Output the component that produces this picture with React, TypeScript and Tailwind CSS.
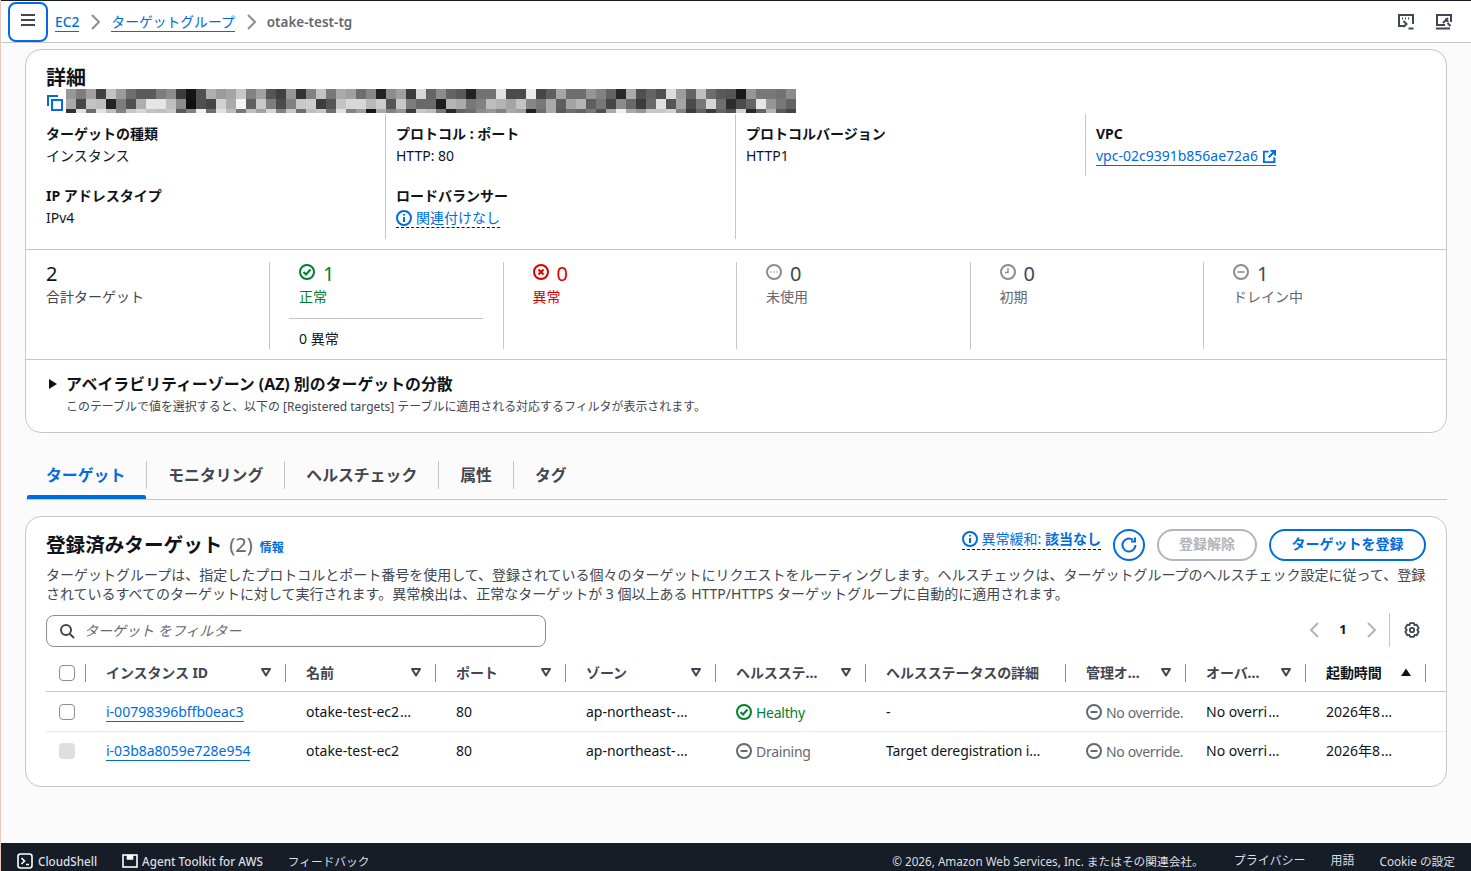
import React from 'react';

const BLUE = '#006ce0';

const pixelRows = [
  [150,125,160,65,195,155,110,90,90,125,140,60,20,80,175,155,165,200,130,160,85,65,150,50,130,195,120,170,160,110,135,35,140,160,60,215,100,140,100,90,35,115,115,225,75,75,235,70,95,165,110,110,150,130,100,40,170,80,100,80,220,155,100,190,110,90,85,25,150,120,120,115,140],
  [170,70,195,190,35,125,80,175,230,230,190,140,15,80,70,210,170,245,95,200,125,75,130,200,205,60,85,195,215,215,185,205,85,200,125,105,105,30,180,170,120,130,190,180,165,195,135,120,170,95,165,180,95,120,70,140,105,60,105,225,85,165,75,120,215,110,45,75,100,230,150,120,100],
  [50,225,110,225,190,130,200,215,195,190,200,90,130,240,110,225,190,120,190,160,215,130,200,110,190,200,110,225,130,160,25,170,130,150,60,200,190,120,40,100,110,140,150,130,170,160,35,110,170,90,110,100,120,80,170,240,170,150,200,200,210,130,60,100,60,100,80,210,40,100,180,90,70],
];

const IconCircleBase = ({ color, children, size = 16 }: { color: string; children?: React.ReactNode; size?: number }) => (
  <svg width={size} height={size} viewBox="0 0 16 16" fill="none" stroke={color} strokeWidth="2" className="shrink-0">
    <circle cx="8" cy="8" r="7" />
    {children}
  </svg>
);

const Chevron = ({ dir = 'right', color = '#8c8c94' }: { dir?: 'left' | 'right'; color?: string }) => (
  <svg width="16" height="16" viewBox="0 0 16 16" fill="none" stroke={color} strokeWidth="2">
    <path d={dir === 'right' ? 'M5 1l7 7-7 7' : 'M11 1L4 8l7 7'} />
  </svg>
);

const InfoLink = ({ label, strong }: { label: string; strong?: string }) => (
  <span className="inline-flex items-center gap-[4px] border-b border-dashed border-[#0f141a] h-[20px] text-[14px] text-[#006ce0] leading-[18px]">
    <IconCircleBase color={BLUE}>
      <path d="M8 7v5M8 4v1.6" />
    </IconCircleBase>
    <span>{label}{strong && <span className="font-bold"> {strong}</span>}</span>
  </span>
);

const Field = ({ label, children }: { label: string; children: React.ReactNode }) => (
  <div className="h-[62px]">
    <div className="text-[14px] font-bold leading-[20px] text-[#0f141a] h-[22px]">{label}</div>
    <div className="text-[14px] leading-[20px] text-[#0f141a]">{children}</div>
  </div>
);

const Stat = ({ icon, value, label, color, numColor, children }: { icon?: React.ReactNode; value: string; label: string; color: string; numColor?: string; children?: React.ReactNode }) => (
  <div className="w-[233.5px] h-[87px] pl-[29px] shrink-0 border-l border-[#c6c6cd]">
    <div className="flex items-center gap-[8px] h-[24px]">
      <span className="mt-[-4px]">{icon}</span>
      <span className="text-[20px] leading-[24px]" style={{ color: numColor || color }}>{value}</span>
    </div>
    <div className="text-[14px] leading-[22px]" style={{ color }}>{label}</div>
    {children}
  </div>
);

const Tab = ({ label, active }: { label: string; active?: boolean }) => (
  <div className="relative h-[38px] flex items-start">
    <div className={`h-[28px] pr-[21px] flex items-center text-[15.85px] font-bold leading-[22px] ${active ? 'text-[#006ce0] pl-[20px]' : 'text-[#424650] pl-[21px]'}`}>{label}</div>
    {active && <div className="absolute left-[1px] right-0 bottom-0 h-[4px] bg-[#006ce0] rounded-t-[2px]"></div>}
  </div>
);

const TabSep = () => <div className="w-px h-[28px] bg-[#c6c6cd]"></div>;

const SortDown = () => (
  <svg width="12" height="12" viewBox="0 0 12 12" fill="none" stroke="#424650" strokeWidth="2" className="shrink-0">
    <path d="M2 3h8L6 9.5z" strokeLinejoin="round" />
  </svg>
);

const HeaderCell = ({ label, sort = 'down', active }: { label: string; sort?: 'down' | 'up' | 'none'; active?: boolean }) => (
  <div className="h-[36px] flex items-center pl-[20px] pr-[14px] pb-[2px] relative">
    <span className={`flex-1 text-[14px] font-bold whitespace-nowrap tracking-[-0.1px] ${active ? 'text-[#0f141a]' : 'text-[#424650]'}`}>{label}</span>
    {sort === 'down' && <SortDown />}
    {sort === 'up' && (
      <svg width="12" height="12" viewBox="0 0 12 12" fill="#0f141a" className="shrink-0"><path d="M1 10h10L6 2.5z" /></svg>
    )}
    <span className="absolute right-0 top-[9px] h-[18px] w-px bg-[#8c8c94]"></span>
  </div>
);

const Checkbox = ({ disabled }: { disabled?: boolean }) => (
  <div className={`w-[16px] h-[16px] rounded-[4px] ${disabled ? 'bg-[#dedee3]' : 'bg-white border border-[#8c8c94]'}`}></div>
);

const MinusIcon = () => (
  <IconCircleBase color="#656871">
    <path d="M4.5 8h7" />
  </IconCircleBase>
);

const Cell = ({ children, className = 'pb-[2px]' }: { children: React.ReactNode; className?: string }) => (
  <div className={`pl-[20px] flex items-center text-[14px] text-[#0f141a] whitespace-nowrap ${className}`}>{children}</div>
);

const Ell = () => <span className="ml-[1px] tracking-[1px]">…</span>;

const rows = [
  {
    id: 'i-00798396bffb0eac3',
    name: 'otake-test-ec2',
    trimmed: true,
    status: 'Healthy',
    detail: '-',
    disabled: false,
  },
  {
    id: 'i-03b8a8059e728e954',
    name: 'otake-test-ec2',
    trimmed: false,
    status: 'Draining',
    detail: 'Target deregistration i…',
    disabled: true,
  },
];

export default function App() {
  return (
    <div className="w-[1471px] h-[871px] overflow-hidden flex flex-col bg-[#fbfbfc] text-[#0f141a] border-l border-[#e8c9bb]" style={{ fontFamily: '"Noto Sans", "Noto Sans CJK JP", sans-serif' }}>
      {/* Top breadcrumb bar */}
      <div className="h-[43px] shrink-0 bg-white border-t border-b border-t-[#161d26] border-b-[#c6c6cd] flex items-center pl-[7px] pr-[18px]">
        <button className="w-[40px] h-[40px] rounded-[8px] border-2 border-[#006ce0] flex items-center justify-center">
          <svg width="16" height="16" viewBox="0 0 16 16" fill="none" stroke="#424650" strokeWidth="2" className="mt-[-3px]"><path d="M1 3h14M1 8h14M1 13h14" /></svg>
        </button>
        <div className="flex items-center ml-[7px] text-[13.8px] h-[24px] mt-[1px]">
          <span className="text-[#006ce0] border-b border-[#006ce0] leading-[18px] font-medium">EC2</span>
          <span className="mx-[8px]"><Chevron /></span>
          <span className="text-[#006ce0] border-b border-[#006ce0] leading-[18px]">ターゲットグループ</span>
          <span className="mx-[8px]"><Chevron /></span>
          <span className="text-[#656871] text-[13.5px] font-semibold leading-[18px]">otake-test-tg</span>
        </div>
        <div className="ml-auto flex items-center gap-[20px]">
          <svg width="18" height="18" viewBox="0 0 18 18" fill="none" stroke="#424650" strokeWidth="2">
            <path d="M7 13H2V2h14v9" />
            <path d="M5 5.5h1M8 5.5h1M11 5.5h1" />
            <path d="M6.5 8l3 3-3 3" />
            <path d="M11.5 15.5h5" />
          </svg>
          <svg width="18" height="18" viewBox="0 0 18 18" fill="none" stroke="#424650" strokeWidth="2">
            <path d="M10 12H2V2h14v7" />
            <path d="M1 15.5h14" />
            <path d="M8 10l5-5M11 5.5a2 2 0 0 0 2.5 2.5M15.5 13l-3-3" />
          </svg>
        </div>
      </div>

      <div className="flex-1 min-h-0 pl-[25px] pr-[24px]">
        {/* Details card */}
        <div className="mt-[6px] w-[1422px] h-[384px] ml-[-1px] bg-white rounded-[16px] border border-[#c6c6cd]">
          <div className="h-[200px] border-b border-[#c6c6cd] pl-[20px]">
            <div className="text-[20px] font-bold leading-[24px] pt-[16px] h-[39px] text-[#0f141a]">詳細</div>
            <div className="flex items-start h-[24px]">
              <svg width="16" height="16" viewBox="0 0 16 16" fill="none" stroke={BLUE} strokeWidth="2" className="mt-[6px] ml-[1px] shrink-0">
                <path d="M1 11V1h10" />
                <rect x="5" y="5" width="10" height="10" />
              </svg>
              <div className="flex flex-col ml-[3px] w-[730px]">
                {pixelRows.map((row, r) => (
                  <div key={r} className={`flex ${r === 2 ? 'h-[4px]' : 'h-[10px]'}`}>
                    {row.map((v, c) => (
                      <div key={c} className="w-[10px] h-full" style={{ backgroundColor: `rgb(${v},${v},${v})` }}></div>
                    ))}
                  </div>
                ))}
              </div>
            </div>
            <div className="flex h-[125px] mt-[1px]">
              <div className="w-[340px] border-r border-[#c6c6cd] pt-[10px] shrink-0">
                <Field label="ターゲットの種類">インスタンス</Field>
                <Field label="IP アドレスタイプ">IPv4</Field>
              </div>
              <div className="w-[350px] border-r border-[#c6c6cd] pt-[10px] pl-[10px] shrink-0">
                <Field label="プロトコル : ポート">HTTP: 80</Field>
                <Field label="ロードバランサー"><InfoLink label="関連付けなし" /></Field>
              </div>
              <div className="w-[350px] border-r border-[#c6c6cd] pt-[10px] pl-[10px] shrink-0 h-[62px] self-start">
                <Field label="プロトコルバージョン">HTTP1</Field>
              </div>
              <div className="pl-[10px] pt-[10px]">
                <Field label="VPC">
                  <span className="text-[#006ce0] inline-flex items-center gap-[5px] border-b border-[#006ce0] leading-[18px]">
                    vpc-02c9391b856ae72a6
                    <svg width="13" height="13" viewBox="0 0 16 16" fill="none" stroke={BLUE} strokeWidth="2.4"><path d="M7 2H1v13h13V9M9 1h6v6M15 1L7 9" /></svg>
                  </span>
                </Field>
              </div>
            </div>
          </div>

          {/* Target counts */}
          <div className="h-[110px] border-b border-[#c6c6cd] pl-[20px] pt-[12px] flex">
            <div className="w-[223px] shrink-0">
              <div className="text-[20px] leading-[24px]">2</div>
              <div className="text-[14px] leading-[22px] text-[#424650]">合計ターゲット</div>
            </div>
            <Stat
              value="1"
              label="正常"
              color="#00802f"
              icon={<IconCircleBase color="#00802f"><path d="M4.5 8l2.5 2.5 4.5-5" /></IconCircleBase>}
            >
              <div className="ml-[-10px] mr-[20px] border-t border-[#c6c6cd] mt-[10px] pt-[10px] pl-[10px] text-[14px] leading-[20px]">0 異常</div>
            </Stat>
            <Stat
              value="0"
              label="異常"
              color="#db0000"
              icon={<IconCircleBase color="#db0000"><path d="M5.5 5.5l5 5M10.5 5.5l-5 5" /></IconCircleBase>}
            />
            <Stat
              value="0"
              label="未使用"
              color="#656871"
              numColor="#424650"
              icon={<IconCircleBase color="#8c8c94" ><path d="M4.5 8h1M7.5 8h1M10.5 8h1" strokeWidth="1.4" /></IconCircleBase>}
            />
            <Stat
              value="0"
              label="初期"
              color="#656871"
              numColor="#424650"
              icon={<IconCircleBase color="#8c8c94"><path d="M8 4v4.5H5" strokeWidth="1.4" /></IconCircleBase>}
            />
            <Stat
              value="1"
              label="ドレイン中"
              color="#656871"
              numColor="#424650"
              icon={<IconCircleBase color="#8c8c94"><path d="M4.5 8h7" strokeWidth="1.6" /></IconCircleBase>}
            />
          </div>

          {/* AZ distribution */}
          <div className="pl-[23px] pt-[13px]">
            <div className="flex items-center h-[22px]">
              <svg width="8" height="10" viewBox="0 0 8 10" fill="#0f141a"><path d="M0 0l8 5-8 5z" /></svg>
              <span className="ml-[9px] text-[15.9px] font-bold leading-[22px]">アベイラビリティーゾーン (AZ) 別のターゲットの分散</span>
            </div>
            <div className="ml-[17px] text-[11.96px] leading-[20px] mt-[2px] text-[#424650]">このテーブルで値を選択すると、以下の [Registered targets] テーブルに適用される対応するフィルタが表示されます。</div>
          </div>
        </div>

        {/* Tabs */}
        <div className="mt-[28px] w-[1421px] h-[39px] border-b border-[#c6c6cd] flex items-start">
          <Tab label="ターゲット" active />
          <TabSep />
          <Tab label="モニタリング" />
          <TabSep />
          <Tab label="ヘルスチェック" />
          <TabSep />
          <Tab label="属性" />
          <TabSep />
          <Tab label="タグ" />
        </div>

        {/* Registered targets */}
        <div className="mt-[16px] ml-[-1px] w-[1422px] h-[271px] bg-white rounded-[16px] border border-[#c6c6cd] relative">
          <div className="flex items-start pl-[20px] pr-[20px] pt-[12px] h-[44px]">
            <div className="flex items-baseline h-[32px] mt-[1px]">
              <span className="text-[19.6px] font-bold leading-[30px]">登録済みターゲット</span>
              <span className="text-[20px] text-[#656871] ml-[7px] leading-[30px]">(2)</span>
              <span className="text-[12px] font-bold text-[#006ce0] ml-[7px]">情報</span>
            </div>
            <div className="ml-auto flex items-center gap-[12px]">
              <div className="mt-[-8px]"><InfoLink label="異常緩和:" strong="該当なし" /></div>
              <button className="w-[32px] h-[32px] rounded-full border-2 border-[#006ce0] flex items-center justify-center">
                <svg width="16" height="16" viewBox="0 0 16 16" fill="none" stroke={BLUE} strokeWidth="2"><path d="M14.5 8A6.5 6.5 0 1 1 12 2.9" /><path d="M14 0.5V4.5H10" /></svg>
              </button>
              <button className="w-[100px] h-[32px] rounded-full border-2 border-[#b4b4bb] text-[14px] font-bold text-[#b4b4bb] flex items-center justify-center pb-[3px]">登録解除</button>
              <button className="w-[157px] h-[32px] rounded-full border-2 border-[#006ce0] text-[14px] font-bold text-[#006ce0] flex items-center justify-center pb-[3px]">ターゲットを登録</button>
            </div>
          </div>
          <div className="pl-[20px] pr-[14px] text-[14px] leading-[19px] text-[#424650] mt-[4px]">
            ターゲットグループは、指定したプロトコルとポート番号を使用して、登録されている個々のターゲットにリクエストをルーティングします。ヘルスチェックは、ターゲットグループのヘルスチェック設定に従って、登録されているすべてのターゲットに対して実行されます。異常検出は、正常なターゲットが 3 個以上ある HTTP/HTTPS ターゲットグループに自動的に適用されます。
          </div>

          <div className="flex items-center pl-[20px] mt-[12px] h-[32px]">
            <div className="w-[500px] h-[32px] rounded-[8px] border border-[#8c8c94] flex items-center pl-[12px] bg-white">
              <svg width="16" height="16" viewBox="0 0 16 16" fill="none" stroke="#424650" strokeWidth="2"><circle cx="7" cy="7" r="5" /><path d="M11 11l4 4" /></svg>
              <span className="ml-[9px] mb-[2px] text-[14px] italic text-[#656871]">ターゲット をフィルター</span>
            </div>
            <div className="ml-auto flex items-center h-[34px] pr-[26px] mt-[-2px]">
              <Chevron dir="left" color="#b4b4bb" />
              <span className="mx-[14px] text-[13px] font-bold w-[12px] text-center">1</span>
              <Chevron dir="right" color="#b4b4bb" />
              <span className="w-px h-[34px] bg-[#c6c6cd] ml-[10px] mr-[14px]"></span>
              <svg width="16" height="16" viewBox="0 0 16 16" fill="none" stroke="#424650" strokeWidth="1.8" strokeLinejoin="round" className="mt-[-1px]">
                <path d="M6 1.2h4l.6 2 2.1-.5 2 3.4-1.5 1.9 1.5 1.9-2 3.4-2.1-.5-.6 2H6l-.6-2-2.1.5-2-3.4L2.8 8 1.3 6.1l2-3.4 2.1.5z" />
                <circle cx="8" cy="8" r="2.2" />
              </svg>
            </div>
          </div>

          {/* Table */}
          <div className="ml-[20px] mt-[8px]">
            <div className="grid grid-cols-[40px_200px_150px_130px_150px_150px_200px_120px_120px_120px_1fr] border-b border-[#c6c6cd]">
              <div className="h-[36px] flex items-center pl-[13px] relative">
                <Checkbox />
                <span className="absolute right-0 top-[9px] h-[18px] w-px bg-[#8c8c94]"></span>
              </div>
              <HeaderCell label="インスタンス ID" />
              <HeaderCell label="名前" />
              <HeaderCell label="ポート" />
              <HeaderCell label="ゾーン" />
              <HeaderCell label="ヘルスステ…" />
              <HeaderCell label="ヘルスステータスの詳細" sort="none" />
              <HeaderCell label="管理オ…" />
              <HeaderCell label="オーバ…" />
              <HeaderCell label="起動時間" sort="up" active />
              <div></div>
            </div>
            {rows.map((r, i) => (
              <div key={r.id} className={`grid grid-cols-[40px_200px_150px_130px_150px_150px_200px_120px_120px_120px_1fr] ${i === 0 ? 'h-[40px] pt-[1px] border-b border-[#e8e8ec]' : 'h-[39px] pb-[1px]'}`}>
                <div className="flex items-center pl-[13px]"><Checkbox disabled={r.disabled} /></div>
                <Cell className=""><span className="text-[#006ce0] border-b border-[#006ce0] leading-[18px]">{r.id}</span></Cell>
                <Cell>{r.name}{r.trimmed && <Ell />}</Cell>
                <Cell>80</Cell>
                <Cell>ap-northeast-<Ell /></Cell>
                <Cell className="">
                  {r.status === 'Healthy' ? (
                    <span className="flex items-center gap-[4px] text-[#00802f] tracking-[-0.25px]">
                      <IconCircleBase color="#00802f"><path d="M4.5 8l2.5 2.5 4.5-5" /></IconCircleBase>Healthy
                    </span>
                  ) : (
                    <span className="flex items-center gap-[4px] text-[#656871] tracking-[-0.25px]"><MinusIcon />Draining</span>
                  )}
                </Cell>
                <Cell className="pb-[2px] tracking-[-0.1px]">{r.detail}</Cell>
                <Cell className=""><span className="flex items-center gap-[4px] text-[#656871] tracking-[-0.35px]"><MinusIcon />No override.</span></Cell>
                <Cell>No overri<Ell /></Cell>
                <Cell>2026年8<Ell /></Cell>
                <div></div>
              </div>
            ))}
          </div>
        </div>
      </div>

      {/* Footer */}
      <div className="h-[28px] shrink-0 bg-[#161d26] flex items-center text-[11.7px] text-[#dedee3] pl-[16px] pr-[16px] pt-[7px] leading-[18px]">
        <svg width="16" height="16" viewBox="0 0 16 16" fill="none" stroke="#ffffff" strokeWidth="1.6"><rect x="1" y="1" width="14" height="14" rx="2.5" /><path d="M4.5 5l3 3-3 3M9 11.5h3" /></svg>
        <span className="ml-[5px] font-medium">CloudShell</span>
        <svg width="16" height="14" viewBox="0 0 16 14" fill="none" stroke="#ffffff" strokeWidth="1.6" className="ml-[25px]"><rect x="1" y="1" width="14" height="12" /><path d="M5.5 1v4h5V1" fill="#ffffff" /></svg>
        <span className="ml-[4px] font-medium">Agent Toolkit for AWS</span>
        <span className="ml-[25px]">フィードバック</span>
        <span className="ml-auto">© 2026, Amazon Web Services, Inc. またはその関連会社。</span>
        <span className="ml-[30px] text-[12px]">プライバシー</span>
        <span className="ml-[25px] text-[12px]">用語</span>
        <span className="ml-[25px]">Cookie の設定</span>
      </div>
    </div>
  );
}
